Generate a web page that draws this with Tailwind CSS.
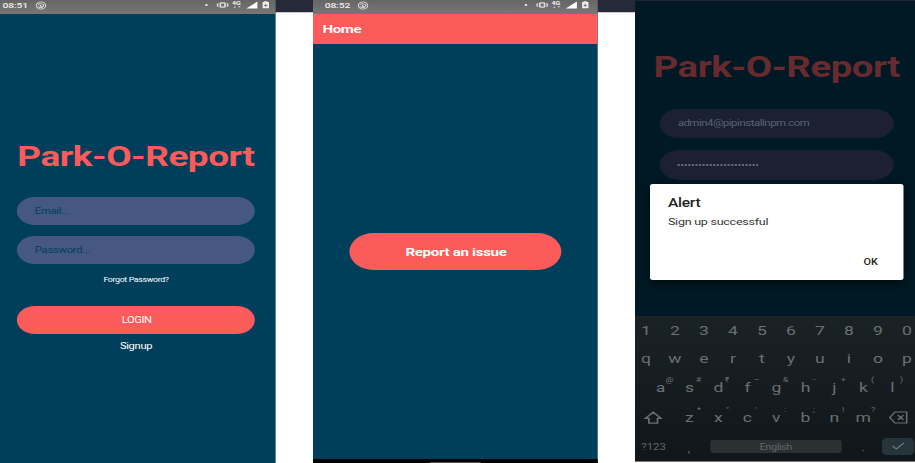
<!DOCTYPE html>
<html lang="en">
<head>
<meta charset="utf-8">
<title>Park-O-Report</title>
<script src="https://cdn.jsdelivr.net/npm/@tailwindcss/browser@4"></script>
</head>
<body class="relative h-[463px] w-[915px] overflow-hidden bg-white font-['Roboto',sans-serif]">
<svg class="hidden">
  <symbol id="status" viewBox="0 0 52 10">
    <circle cx="1.8" cy="5" r="1" fill="#eee"/>
    <rect x="12.500" y="2.8" width="3.6" height="4.400" rx=".8" fill="none" stroke="#ddd" stroke-width="1.3"/>
    <path d="M11 3.2 10.100 5l.9 1.8M17.600 3.2l.9 1.8-.9 1.8" fill="none" stroke="#ddd" stroke-width="1"/>
    <text x="21.500" y="4.700" font-size="5.4" font-weight="700" fill="#eee">4G</text>
    <path d="m22.500 7.800 1.100-1.600L24.700 7.800zM26 6.200l1.100 1.600 1.100-1.600z" fill="#ccc"/>
    <path d="M32.500 8.500h8.500V1.600z" fill="#fff"/>
    <path d="M45 2.100h1.200v-.8h2.400v.8h1.300v6.2H45z" fill="#eee"/>
    <path d="M47.400 3.800v3M46.100 5.300h2.600" stroke="#707070" stroke-width=".8"/>
  </symbol>
  <symbol id="swirl" viewBox="0 0 9 9">
    <circle cx="4.5" cy="4.5" r="3.6" fill="none" stroke="#ddd" stroke-width=".8"/>
    <path d="M2.3 3.4c1.200-1 3.900-.8 4.300.7.2 1.400-1.500 2-2.400 1.400-.8-.6.1-1.400.8-1M2 5.400c1 1.500 2.800 1.600 4 .8" fill="none" stroke="#ddd" stroke-width=".8"/>
  </symbol>
</svg>

<div class="h-[12px] w-full border-b border-[#c9c9cf] bg-[#262938] box-content"></div>

<!-- Login -->
<section class="absolute left-0 top-0 flex h-[463px] w-[212.4px] origin-top-left scale-x-130 flex-col bg-[#003f5c]">
  <header class="flex h-[14px] shrink-0 items-start bg-linear-to-b from-[#666] to-[#777] pl-[2px] pr-[3px] text-[7.9px] font-medium leading-[11px] tracking-[-0.1px] text-[#eee]">
    <span>08:51</span>
    <svg class="ml-[5.500px] mt-[.5px] h-[9px] w-[9px]"><use href="#swirl"/></svg>
    <svg class="ml-auto h-[10px] w-[52px] tracking-normal"><use href="#status"/></svg>
  </header>
  <main class="flex flex-col pl-[13.3px] pr-[16.4px] text-[8.600px] tracking-[-0.18px] text-white">
    <h1 class="mt-[125px] text-[28.4px] font-bold leading-[36px] tracking-[-0.35px] whitespace-nowrap text-[#fb5b5a]">Park-O-Report</h1>
    <div class="mt-[22px] flex h-[28px] items-center rounded-full bg-[#465881] pl-[13.500px] text-[#003f5c]">Email...</div>
    <div class="mt-[11px] flex h-[28px] items-center rounded-full bg-[#465881] pl-[13.500px] text-[#003f5c]">Password...</div>
    <a class="mt-[11px] text-center text-[6.8px] leading-[10px] tracking-[-0.28px]">Forgot Password?</a>
    <button class="mt-[21px] h-[28px] rounded-full bg-[#fb5b5a] pt-px pl-px text-[8.600px] tracking-[-0.35px]">LOGIN</button>
    <a class="mt-[7px] text-center leading-[10px] tracking-[-0.25px]">Signup</a>
  </main>
</section>

<!-- Home -->
<section class="absolute left-[313.3px] top-0 flex h-[463px] w-[219px] origin-top-left scale-x-130 flex-col bg-[#003f5c]">
  <header class="flex h-[14px] shrink-0 items-start bg-linear-to-b from-[#666] to-[#777] pl-[9px] pr-[5.500px] text-[7.9px] font-medium leading-[11px] tracking-[-0.1px] text-[#eee]">
    <span>08:52</span>
    <svg class="ml-[5.500px] mt-[.5px] h-[9px] w-[9px]"><use href="#swirl"/></svg>
    <svg class="ml-auto h-[10px] w-[52px] tracking-normal"><use href="#status"/></svg>
  </header>
  <div class="flex h-[30px] shrink-0 items-center bg-[#fb5b5a] pl-[7.3px] pt-[1px] text-[11.6px] font-bold tracking-[-0.3px] text-white">Home</div>
  <main class="flex grow flex-col items-center">
    <button class="mt-[189px] h-[37px] w-[163px] rounded-full bg-[#fb5b5a] pt-[2px] pl-px text-[11.6px] font-bold tracking-[-0.24px] text-white">Report an issue</button>
  </main>
  <footer class="flex h-[4px] items-end justify-center bg-black"><span class="h-px w-[39px] bg-[#555]"></span></footer>
</section>

<!-- Sign up -->
<section class="absolute left-[634.6px] top-0 h-[462px] w-[217px] origin-top-left scale-x-130 overflow-hidden border-b border-[#777] bg-[#011924]">
  <div class="h-px bg-[#20242c]"></div>
  <main class="flex h-[315px] flex-col pl-[18.800px] text-[8.800px] text-[#5c6270]">
    <h1 class="mt-[48px] -ml-[4.5px] text-[29.5px] font-bold leading-[36px] tracking-[-0.38px] whitespace-nowrap text-[#672a2e]">Park-O-Report</h1>
    <div class="mt-[24px] flex h-[29px] w-[180px] items-center rounded-full bg-[#1b2133] pl-[14px] pt-px tracking-[-0.36px]">admin4@pipinstallnpm.com</div>
    <div class="mt-[12px] flex h-[30px] w-[180px] items-center rounded-full bg-[#1b2133] pl-[13.500px]">
      <svg class="h-[2px] w-[63px]"><path d="M.7 1h62" stroke="#7a7f8a" stroke-width="1.5" stroke-dasharray="1.7 1.05"/></svg>
    </div>
  </main>

  <div class="flex h-[146px] w-[223px] -ml-[2.7px] flex-col bg-linear-to-b from-[#1b2226] to-[#101619] text-[13.5px] leading-[28px] text-[#697074]">
    <div class="grid h-[28px] grid-cols-10 text-center"><span>1</span><span>2</span><span>3</span><span>4</span><span>5</span><span>6</span><span>7</span><span>8</span><span>9</span><span>0</span></div>
    <div class="grid h-[28.500px] grid-cols-10 text-center"><span>q</span><span>w</span><span>e</span><span>r</span><span>t</span><span>y</span><span>u</span><span>i</span><span>o</span><span>p</span></div>
    <div class="grid h-[30px] grid-cols-9 pl-[11.1px] pr-[11.1px] text-center">
      <span class="relative">a<i class="absolute left-[15px] -top-[7px] text-[7px] not-italic">@</i></span>
      <span class="relative">s<i class="absolute left-[16px] -top-[7px] text-[7px] not-italic">#</i></span>
      <span class="relative">d<i class="absolute left-[16px] -top-[7px] text-[7px] not-italic">₹</i></span>
      <span class="relative">f<i class="absolute left-[16px] -top-[7px] text-[7px] not-italic">–</i></span>
      <span class="relative">g<i class="absolute left-[16px] -top-[7px] text-[7px] not-italic">&amp;</i></span>
      <span class="relative">h<i class="absolute left-[17px] -top-[7px] text-[7px] not-italic">-</i></span>
      <span class="relative">j<i class="absolute left-[16px] -top-[7px] text-[7px] not-italic">+</i></span>
      <span class="relative">k<i class="absolute left-[17px] -top-[7px] text-[7px] not-italic">(</i></span>
      <span class="relative">l<i class="absolute left-[17px] -top-[7px] text-[7px] not-italic">)</i></span>
    </div>
    <div class="flex h-[29.500px] text-center">
      <span class="flex w-[33.4px] items-center justify-center"><svg class="mt-[1px] h-[14px] w-[14px]" viewBox="0 0 14 14" fill="none" stroke="#697074" stroke-width="1.3"><path d="M7 1.3 1 7.4h2.7v4.8h6.6V7.4H13z"/></svg></span>
      <span class="relative w-[22.3px]">z<i class="absolute left-[17px] -top-[7px] text-[7px] not-italic">*</i></span>
      <span class="relative w-[22.3px]">x<i class="absolute left-[17px] -top-[7px] text-[7px] not-italic">"</i></span>
      <span class="relative w-[22.3px]">c<i class="absolute left-[17px] -top-[7px] text-[7px] not-italic">'</i></span>
      <span class="relative w-[22.3px]">v<i class="absolute left-[17px] -top-[7px] text-[7px] not-italic">:</i></span>
      <span class="relative w-[22.3px]">b<i class="absolute left-[17px] -top-[7px] text-[7px] not-italic">;</i></span>
      <span class="relative w-[22.3px]">n<i class="absolute left-[17px] -top-[7px] text-[7px] not-italic">!</i></span>
      <span class="relative w-[22.3px]">m<i class="absolute left-[17px] -top-[7px] text-[7px] not-italic">?</i></span>
      <span class="ml-[8.500px] flex items-center"><svg class="mt-[1px] h-[13px] w-[15px]" viewBox="0 0 15 13" fill="none" stroke="#697074" stroke-width="1.2"><path d="M5 1h9v11H5L1 6.5zM7.2 4.2l4.4 4.6M11.6 4.2 7.2 8.800"/></svg></span>
    </div>
    <div class="flex h-[29px] items-center text-[8.8px] text-[#5f666a]">
      <span class="ml-[7.5px] w-[32px]">?123</span>
      <span class="mt-[5px] w-[21.200px] pl-[3.500px] text-[11px]">,</span>
      <span class="h-[13px] w-[100.5px] rounded-[2px] bg-[#2b3033] text-center text-[8.500px] leading-[14px] tracking-[-0.35px]">English</span>
      <span class="ml-[15.500px] w-[16px] mt-[3px] text-[11px]">.</span>
      <span class="flex h-[17px] w-[25px] -mt-[1px] items-center justify-center rounded-[4px] bg-[#26343b]"><svg class="h-[8px] w-[11px]" fill="none" stroke="#6c787e" stroke-width="1.1"><path d="m1 3.800 3 3.200L10 .8"/></svg></span>
    </div>
  </div>
</section>

<!-- Alert dialog -->
<div role="dialog" class="absolute left-[649.6px] top-[183.500px] flex h-[96.500px] w-[195px] origin-top-left scale-x-130 flex-col rounded-[2px] bg-white px-[13.800px] text-[#222] shadow-[0_3px_8px_rgba(0,0,0,0.6)]">
  <h2 class="mt-[11.500px] text-[12px] font-medium leading-[16px] tracking-[-0.2px]">Alert</h2>
  <p class="mt-[3.500px] text-[9.600px] leading-[14px] tracking-[-0.18px] text-[#333]">Sign up successful</p>
  <button class="mt-[27.500px] mr-[6px] self-end text-[8.300px] font-medium leading-[12px]">OK</button>
</div>
</body>
</html>
